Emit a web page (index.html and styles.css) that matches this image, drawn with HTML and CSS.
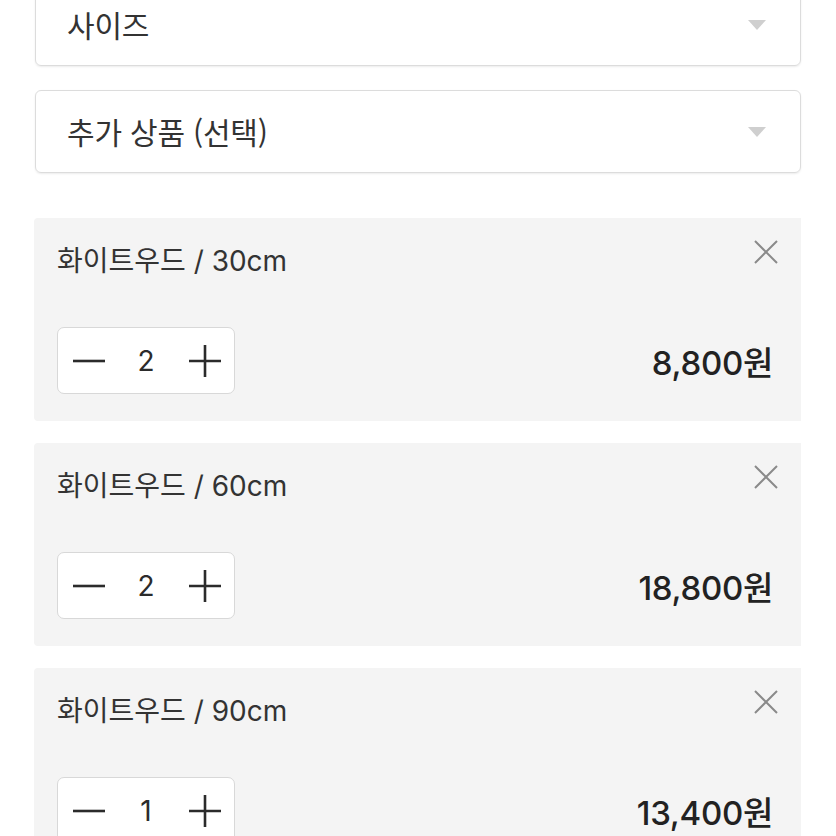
FILE: index.html
```html
<!DOCTYPE html>
<html lang="ko">
<head>
<meta charset="utf-8">
<link rel="stylesheet" href="styles.css">
</head>
<body>
<div class="page">
  <div class="select first"><span>사이즈</span><i class="caret"></i></div>
  <div class="select"><span>추가 상품 (선택)</span><i class="caret"></i></div>

  <div class="items">
    <div class="card">
      <div class="title">화이트우드 / 30cm</div>
      <svg class="close" width="26" height="26" viewBox="0 0 26 26"><path d="M2 2L24 24M24 2L2 24" stroke="#8a8a8a" stroke-width="2" fill="none"/></svg>
      <div class="row">
        <div class="qty">
          <svg width="32" height="32" viewBox="0 0 32 32"><path d="M0 16H32" stroke="#2b2b2b" stroke-width="2.6"/></svg>
          <span class="num">2</span>
          <svg width="32" height="32" viewBox="0 0 32 32"><path d="M0 16H32M16 0V32" stroke="#2b2b2b" stroke-width="2.6"/></svg>
        </div>
        <div class="price">8,800원</div>
      </div>
    </div>
    <div class="card">
      <div class="title">화이트우드 / 60cm</div>
      <svg class="close" width="26" height="26" viewBox="0 0 26 26"><path d="M2 2L24 24M24 2L2 24" stroke="#8a8a8a" stroke-width="2" fill="none"/></svg>
      <div class="row">
        <div class="qty">
          <svg width="32" height="32" viewBox="0 0 32 32"><path d="M0 16H32" stroke="#2b2b2b" stroke-width="2.6"/></svg>
          <span class="num">2</span>
          <svg width="32" height="32" viewBox="0 0 32 32"><path d="M0 16H32M16 0V32" stroke="#2b2b2b" stroke-width="2.6"/></svg>
        </div>
        <div class="price">18,800원</div>
      </div>
    </div>
    <div class="card">
      <div class="title">화이트우드 / 90cm</div>
      <svg class="close" width="26" height="26" viewBox="0 0 26 26"><path d="M2 2L24 24M24 2L2 24" stroke="#8a8a8a" stroke-width="2" fill="none"/></svg>
      <div class="row">
        <div class="qty">
          <svg width="32" height="32" viewBox="0 0 32 32"><path d="M0 16H32" stroke="#2b2b2b" stroke-width="2.6"/></svg>
          <span class="num">1</span>
          <svg width="32" height="32" viewBox="0 0 32 32"><path d="M0 16H32M16 0V32" stroke="#2b2b2b" stroke-width="2.6"/></svg>
        </div>
        <div class="price">13,400원</div>
      </div>
    </div>
  </div>
</div>
</body>
</html>
```

FILE: styles.css
```css
html, body {
  margin: 0;
  padding: 0;
  background: #fff;
  overflow: hidden;
}
body {
  font-family: "Inter", "Noto Sans CJK KR", sans-serif;
  color: #333;
}
.page {
  width: 767px;
  margin-left: 34px;
  display: flex;
  flex-direction: column;
}
.select {
  margin-left: 1px;
  height: 81px;
  border: 1px solid #dcdcdc;
  border-radius: 6px;
  box-shadow: 0 1px 2px rgba(0,0,0,0.08);
  display: flex;
  align-items: center;
  justify-content: space-between;
  padding: 0 34px 0 31px;
  font-family: "Noto Sans CJK KR", sans-serif;
  font-size: 30px;
  font-weight: 400;
  letter-spacing: -0.2px;
  color: #333;
  margin-bottom: 24px;
}
.select.first {
  margin-top: -17px;
}
.select span {
  position: relative;
  top: -1px;
}
.caret {
  width: 0;
  height: 0;
  border-left: 9px solid transparent;
  border-right: 9px solid transparent;
  border-top: 10px solid #cfcfcf;
}
.items {
  margin-top: 21px;
  display: flex;
  flex-direction: column;
  gap: 22px;
}
.card {
  position: relative;
  background: #f4f4f4;
  border-radius: 4px 0 0 4px;
  height: 203px;
  box-sizing: border-box;
  padding: 23px 28px 0 23px;
}
.title {
  font-size: 28px;
  line-height: 40px;
  color: #333;
}
.card .close {
  position: absolute;
  top: 21px;
  right: 22px;
}
.row {
  margin-top: 46px;
  display: flex;
  align-items: center;
  justify-content: space-between;
}
.qty {
  width: 176px;
  height: 65px;
  background: #fff;
  border: 1px solid #d8d8d8;
  border-radius: 7px;
  display: grid;
  grid-template-columns: 62px 1fr 62px;
  align-items: center;
  justify-items: center;
}
.qty svg:last-child {
  margin-left: 4px;
}
.num {
  font-size: 28px;
  color: #2b2b2b;
}
.price {
  font-size: 33px;
  font-weight: 500;
  color: #222;
  letter-spacing: -0.3px;
}
```
